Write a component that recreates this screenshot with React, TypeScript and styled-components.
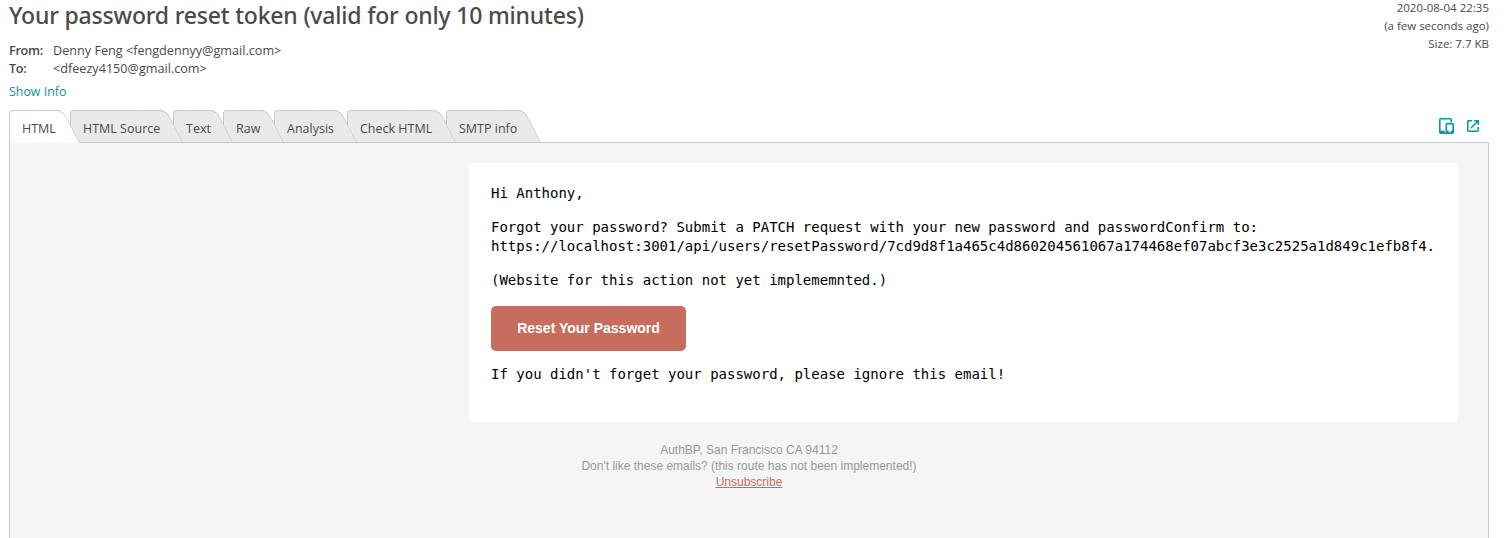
import React from 'react';
import styled, { createGlobalStyle, css } from 'styled-components';

const GlobalStyle = createGlobalStyle`
  * { box-sizing: border-box; }
  body {
    margin: 0;
    background: #fff;
    color: #4a4a4a;
    font-family: 'Open Sans', 'Noto Sans', sans-serif;
    overflow: hidden;
  }
`;

const Page = styled.main`
  display: flex;
  flex-direction: column;
  height: 538px;
  padding: 0 20px 0 9px;
`;

const Header = styled.header`
  display: flex;
  justify-content: space-between;
  height: 110px;
`;

const Subject = styled.h1`
  margin: 0;
  height: 41px;
  font: 500 23px/31px 'Noto Sans', sans-serif;
  letter-spacing: -0.19px;
`;

const Addresses = styled.dl`
  display: grid;
  grid-template-columns: 44px auto;
  grid-auto-rows: 18px;
  margin: 0;
  font-size: 12.65px;
  line-height: 18px;
`;

const Label = styled.dt`
  font-weight: 600;
  letter-spacing: -0.3px;
`;

const Value = styled.dd`
  margin: 0;
`;

const InfoLink = styled.a`
  display: block;
  margin-top: 6px;
  color: #0b9494;
  font-size: 12.4px;
  line-height: 18px;
`;

const Meta = styled.div`
  font-size: 11.5px;
  line-height: 18px;
  text-align: right;
  margin-top: -1px;
`;

const TabBar = styled.div`
  display: flex;
  justify-content: space-between;
  height: 32px;
`;

const Tabs = styled.nav`
  display: flex;
`;

const Tab = styled.a<{ $width: number; $order: number; $active?: boolean }>`
  --fill: ${(p) => (p.$active ? '#fff' : '#e9e9e9')};
  position: relative;
  z-index: ${(p) => p.$order};
  width: ${(p) => p.$width}px;
  height: ${(p) => (p.$active ? 33 : 32)}px;
  padding-left: 13px;
  font-size: 12.5px;
  line-height: 38px;
  white-space: nowrap;

  &::before,
  &::after {
    content: '';
    position: absolute;
    top: 0;
    bottom: 0;
    background: var(--fill);
    border: 0 solid #c9c9c9;
  }

  &::before {
    left: 0;
    right: 10px;
    border-width: 1px 0 0 1px;
    border-top-left-radius: 4px;
  }

  &::after {
    right: -10px;
    width: 28px;
    border-width: 1px 1px 0 0;
    border-top-right-radius: 7px;
    transform: skewX(27deg);
    transform-origin: 100% 100%;
  }
`;

const TabText = styled.span`
  position: relative;
  z-index: 1;
`;

const Actions = styled.div`
  display: flex;
  align-items: flex-start;
  gap: 13px;
  padding: 8px 10px 0 0;
  color: #009c98;
`;

const iconBox = css`
  display: block;
  fill: none;
  stroke: currentColor;
`;

const DevicesIcon = styled.svg`
  ${iconBox}
  width: 15px;
  height: 16px;
`;

const OpenIcon = styled.svg`
  ${iconBox}
  width: 12px;
  height: 12px;
  margin-top: 2px;
`;

const Preview = styled.section`
  flex: 1;
  border: 1px solid #c9c9c9;
  border-bottom: 0;
  background: #f5f5f5;
  padding: 20px 0 0 459px;
`;

const Card = styled.article`
  width: 989px;
  height: 259px;
  padding: 21px 22px;
  border-radius: 4px;
  background: #fff;
  color: #000;
  font: 14px/19px 'DejaVu Sans Mono', monospace;
`;

const Paragraph = styled.p`
  margin: 0 0 15px;
  white-space: nowrap;
`;

const ResetButton = styled.a`
  display: flex;
  align-items: center;
  justify-content: center;
  width: 195px;
  height: 45px;
  margin: 16px 0 14px;
  padding-bottom: 2px;
  border-radius: 5px;
  background: #c76d5e;
  color: #fff;
  font: bold 14px/16px 'Liberation Sans', Arial, sans-serif;
`;

const Footer = styled.footer`
  width: 560px;
  margin-top: 20px;
  color: #999;
  font: 12px/16px 'Liberation Sans', Arial, sans-serif;
  text-align: center;
`;

const Unsubscribe = styled.a`
  color: #c76d5e;
  text-decoration: underline;
`;

const tabs = [
  { label: 'HTML', width: 61 },
  { label: 'HTML Source', width: 103 },
  { label: 'Text', width: 50 },
  { label: 'Raw', width: 51 },
  { label: 'Analysis', width: 73 },
  { label: 'Check HTML', width: 99 },
  { label: 'SMTP info', width: 85 },
];

export default function App() {
  return (
    <Page>
      <GlobalStyle />
      <Header>
        <div>
          <Subject>Your password reset token (valid for only 10 minutes)</Subject>
          <Addresses>
            <Label>From:</Label>
            <Value>Denny Feng &lt;fengdennyy@gmail.com&gt;</Value>
            <Label>To:</Label>
            <Value>&lt;dfeezy4150@gmail.com&gt;</Value>
          </Addresses>
          <InfoLink>Show Info</InfoLink>
        </div>
        <Meta>
          <div>2020-08-04 22:35</div>
          <div>(a few seconds ago)</div>
          <div>Size: 7.7 KB</div>
        </Meta>
      </Header>
      <TabBar>
        <Tabs>
          {tabs.map((tab, i) => (
            <Tab key={tab.label} $width={tab.width} $order={tabs.length - i} $active={i === 0}>
              <TabText>{tab.label}</TabText>
            </Tab>
          ))}
        </Tabs>
        <Actions>
          <DevicesIcon viewBox="0 0 15 16">
            <path d="M12.2 4V1.8Q12.2 .8 11.2 .8H1.8Q.8 .8 .8 1.8V14.2Q.8 15.2 1.8 15.2H7" strokeWidth="1.6" />
            <path d="M1 14.2H5.6" strokeWidth="3" />
            <rect x="7.3" y="5.6" width="6.9" height="9.6" rx="1" strokeWidth="1.6" />
            <path d="M7 14.2H9.8M11.6 14.2H14.2" strokeWidth="2.8" />
          </DevicesIcon>
          <OpenIcon viewBox="0 0 12 12">
            <path d="M5 .8H1.4Q.8 .8 .8 1.4V10.6Q.8 11.2 1.4 11.2H10.6Q11.2 11.2 11.2 10.6V7" strokeWidth="1.5" />
            <path d="M7 .8H11.2V5M11 1L4 8" strokeWidth="1.5" />
          </OpenIcon>
        </Actions>
      </TabBar>
      <Preview>
        <Card>
          <Paragraph>Hi Anthony,</Paragraph>
          <Paragraph>
            Forgot your password? Submit a PATCH request with your new password and passwordConfirm to:
            <br />
            https://localhost:3001/api/users/resetPassword/7cd9d8f1a465c4d860204561067a174468ef07abcf3e3c2525a1d849c1efb8f4.
          </Paragraph>
          <Paragraph>(Website for this action not yet implememnted.)</Paragraph>
          <ResetButton>Reset Your Password</ResetButton>
          <Paragraph>If you didn't forget your password, please ignore this email!</Paragraph>
        </Card>
        <Footer>
          <div>AuthBP, San Francisco CA 94112</div>
          <div>Don't like these emails? (this route has not been implemented!)</div>
          <Unsubscribe>Unsubscribe</Unsubscribe>
        </Footer>
      </Preview>
    </Page>
  );
}
